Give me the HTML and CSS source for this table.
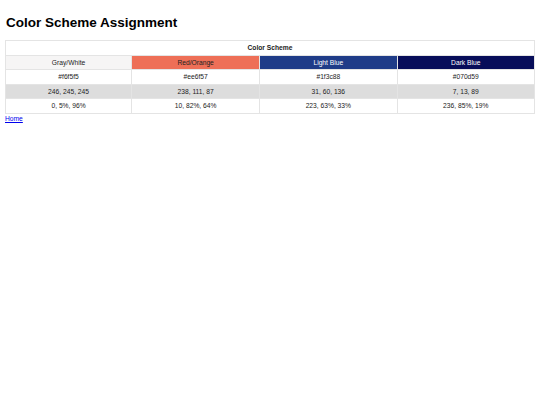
FILE: index.html
```html
<!DOCTYPE html>
<html>
<head>
<meta charset="utf-8">
<title>Color Scheme Assignment</title>
<link rel="stylesheet" href="styles.css">
</head>
<body>
<h1 class="title">Color Scheme Assignment</h1>
<table class="scheme">
  <tr><th colspan="4" class="caption-cell">Color Scheme</th></tr>
  <tr class="names">
    <td class="c-gray">Gray/White</td>
    <td class="c-red">Red/Orange</td>
    <td class="c-light">Light Blue</td>
    <td class="c-dark">Dark Blue</td>
  </tr>
  <tr><td>#f6f5f5</td><td>#ee6f57</td><td>#1f3c88</td><td>#070d59</td></tr>
  <tr class="alt"><td>246, 245, 245</td><td>238, 111, 87</td><td>31, 60, 136</td><td>7, 13, 89</td></tr>
  <tr><td>0, 5%, 96%</td><td>10, 82%, 64%</td><td>223, 63%, 33%</td><td>236, 85%, 19%</td></tr>
</table>
<a class="home" href="#">Home</a>
</body>
</html>
```
FILE: styles.css
```css
body {
  margin: 5px;
  font-family: "Liberation Sans", Arial, sans-serif;
  background: #fff;
  color: #000;
}
.title {
  font-size: 13.5px;
  font-weight: bold;
  margin: 9px 0 9px 1px;
  line-height: 17px;
}
.scheme {
  width: 100%;
  border-collapse: collapse;
  font-size: 6.7px;
}
.scheme th, .scheme td {
  border: 1px solid #e4e4e4;
  text-align: center;
  height: 13.5px;
  padding: 0 4px;
  color: #222;
}
.caption-cell { font-weight: bold; }
.scheme .c-gray { background: #f6f5f5; }
.scheme .c-red { background: #ee6f57; }
.scheme .c-light { background: #1f3c88; color: #fff; }
.scheme .c-dark { background: #070d59; color: #fff; }
.alt td { background: #dddddd; }
.home {
  display: block;
  font-size: 6.7px;
  line-height: 9px;
  color: #0000ee;
  margin-top: 0;
}
```
